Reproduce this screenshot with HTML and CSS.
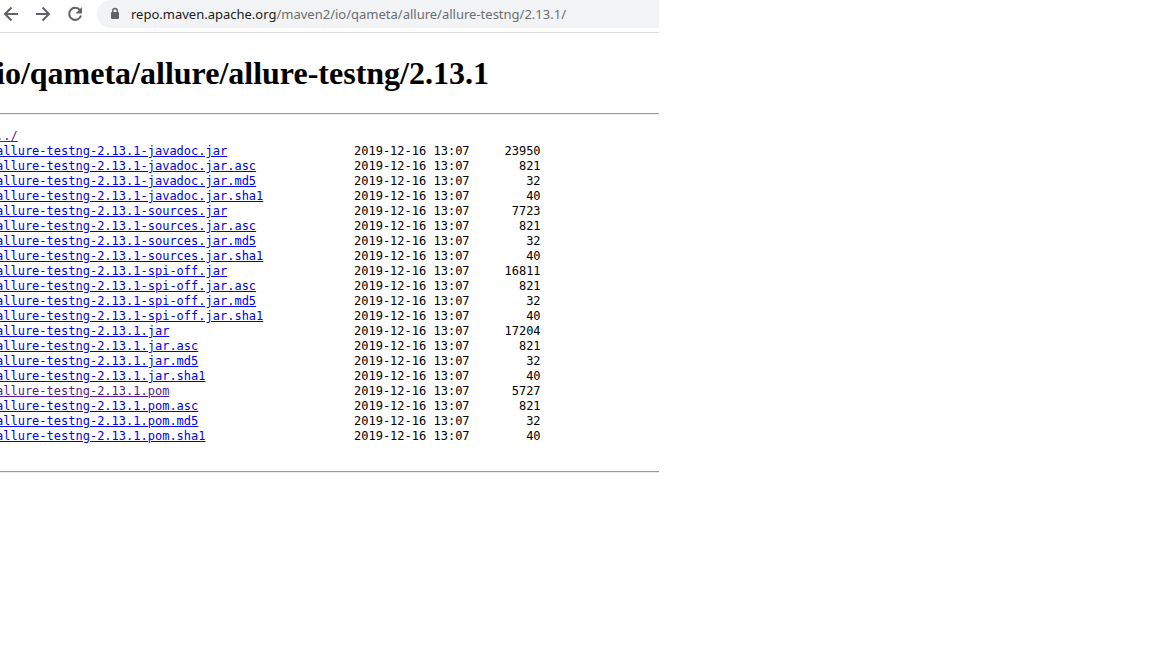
FILE: index.html
```html
<!DOCTYPE html>
<html lang="en">
<head>
<meta charset="utf-8">
<title>io/qameta/allure/allure-testng/2.13.1</title>
<link rel="stylesheet" href="styles.css">
</head>
<body>
<div class="window">
  <header class="toolbar">
    <nav class="nav">
      <button class="nav-btn" type="button" aria-label="Back"><svg width="16" height="16" viewBox="0 0 16 16"><path d="M15 8H2.5M8.5 1.5L2 8l6.500 6.500"/></svg></button>
      <button class="nav-btn" type="button" aria-label="Forward"><svg width="16" height="16" viewBox="0 0 16 16"><path d="M1 8h12.500M7.500 1.500L14 8l-6.500 6.500"/></svg></button>
      <button class="nav-btn" type="button" aria-label="Reload"><svg width="16" height="16" viewBox="0 0 16 16"><path d="M13 4.200A6 6 0 1 0 14 9.500"/><path class="solid" d="M15 1v6.500H8.500z"/></svg></button>
    </nav>
    <div class="address">
      <svg class="lock" width="10" height="14" viewBox="0 0 10 14"><rect class="lock-body" x="1" y="5" width="8" height="7" rx="1"/><path class="lock-bar" d="M2.700 5.500V3.800a2.300 2.300 0 0 1 4.600 0v1.700"/></svg>
      <div class="url" role="textbox" aria-label="Address" contenteditable="true" spellcheck="false"><span class="host">repo.maven.apache.org</span>/maven2/io/qameta/allure/allure-testng/2.13.1/</div>
    </div>
  </header>
  <main class="page">
    <h1 class="title">io/qameta/allure/allure-testng/2.13.1</h1>
    <hr class="rule">
    <table class="files">
      <tbody>
        <tr><td class="name"><a class="visited" href="#">../</a></td><td class="date"></td><td class="size"></td></tr>
        <tr><td class="name"><a href="#">allure-testng-2.13.1-javadoc.jar</a></td><td class="date">2019-12-16 13:07</td><td class="size">23950</td></tr>
        <tr><td class="name"><a href="#">allure-testng-2.13.1-javadoc.jar.asc</a></td><td class="date">2019-12-16 13:07</td><td class="size">821</td></tr>
        <tr><td class="name"><a href="#">allure-testng-2.13.1-javadoc.jar.md5</a></td><td class="date">2019-12-16 13:07</td><td class="size">32</td></tr>
        <tr><td class="name"><a href="#">allure-testng-2.13.1-javadoc.jar.sha1</a></td><td class="date">2019-12-16 13:07</td><td class="size">40</td></tr>
        <tr><td class="name"><a href="#">allure-testng-2.13.1-sources.jar</a></td><td class="date">2019-12-16 13:07</td><td class="size">7723</td></tr>
        <tr><td class="name"><a href="#">allure-testng-2.13.1-sources.jar.asc</a></td><td class="date">2019-12-16 13:07</td><td class="size">821</td></tr>
        <tr><td class="name"><a href="#">allure-testng-2.13.1-sources.jar.md5</a></td><td class="date">2019-12-16 13:07</td><td class="size">32</td></tr>
        <tr><td class="name"><a href="#">allure-testng-2.13.1-sources.jar.sha1</a></td><td class="date">2019-12-16 13:07</td><td class="size">40</td></tr>
        <tr><td class="name"><a href="#">allure-testng-2.13.1-spi-off.jar</a></td><td class="date">2019-12-16 13:07</td><td class="size">16811</td></tr>
        <tr><td class="name"><a href="#">allure-testng-2.13.1-spi-off.jar.asc</a></td><td class="date">2019-12-16 13:07</td><td class="size">821</td></tr>
        <tr><td class="name"><a href="#">allure-testng-2.13.1-spi-off.jar.md5</a></td><td class="date">2019-12-16 13:07</td><td class="size">32</td></tr>
        <tr><td class="name"><a href="#">allure-testng-2.13.1-spi-off.jar.sha1</a></td><td class="date">2019-12-16 13:07</td><td class="size">40</td></tr>
        <tr><td class="name"><a href="#">allure-testng-2.13.1.jar</a></td><td class="date">2019-12-16 13:07</td><td class="size">17204</td></tr>
        <tr><td class="name"><a href="#">allure-testng-2.13.1.jar.asc</a></td><td class="date">2019-12-16 13:07</td><td class="size">821</td></tr>
        <tr><td class="name"><a href="#">allure-testng-2.13.1.jar.md5</a></td><td class="date">2019-12-16 13:07</td><td class="size">32</td></tr>
        <tr><td class="name"><a href="#">allure-testng-2.13.1.jar.sha1</a></td><td class="date">2019-12-16 13:07</td><td class="size">40</td></tr>
        <tr><td class="name"><a class="visited" href="#">allure-testng-2.13.1.pom</a></td><td class="date">2019-12-16 13:07</td><td class="size">5727</td></tr>
        <tr><td class="name"><a href="#">allure-testng-2.13.1.pom.asc</a></td><td class="date">2019-12-16 13:07</td><td class="size">821</td></tr>
        <tr><td class="name"><a href="#">allure-testng-2.13.1.pom.md5</a></td><td class="date">2019-12-16 13:07</td><td class="size">32</td></tr>
        <tr><td class="name"><a href="#">allure-testng-2.13.1.pom.sha1</a></td><td class="date">2019-12-16 13:07</td><td class="size">40</td></tr>
      </tbody>
    </table>
    <hr class="rule">
  </main>
</div>
</body>
</html>
```
FILE: styles.css
```css
body {
  margin: 0;
  background: #fff;
  color: #000;
}
.window {
  width: 57.2%;
  overflow: hidden;
}
.toolbar {
  display: flex;
  align-items: flex-start;
  gap: 14px;
  padding-left: 3px;
  padding-bottom: 4px;
  border-bottom: 1px solid #dadce0;
}
.nav {
  display: flex;
  gap: 16px;
  padding-top: 6px;
}
.nav-btn {
  display: block;
  padding: 0;
  border: 0;
  background: none;
}
.nav-btn svg {
  display: block;
  fill: none;
  stroke: #5f6368;
  stroke-width: 2;
}
.nav-btn .solid {
  fill: #5f6368;
  stroke: none;
}
.address {
  display: flex;
  flex: 1;
  align-items: center;
  gap: 11px;
  height: 28px;
  padding-left: 13px;
  border-radius: 14px 0 0 14px;
  background: #f1f3f4;
}
.lock-body {
  fill: #5f6368;
}
.lock-bar {
  fill: none;
  stroke: #5f6368;
  stroke-width: 1.4;
}
.url {
  font: 13px/20px "Noto Sans", "Open Sans", sans-serif;
  color: #6b6f73;
  white-space: nowrap;
}
.host {
  color: #202124;
}
.page {
  margin-left: -4px;
}
.title {
  margin: 21px 0;
  font: bold 32px/38px "Liberation Serif", serif;
}
.rule {
  height: 0;
  margin: 0;
  border: 0;
  border-top: 1px solid #9a9a9a;
  border-bottom: 1px solid #eee;
}
.files {
  margin: 14px 0 27px;
  border-collapse: collapse;
  font: 12px/15px "DejaVu Sans Mono", monospace;
}
.files td {
  padding: 0;
  height: 15px;
  white-space: nowrap;
}
.files .name {
  width: 358px;
}
.files .size {
  width: 71px;
  text-align: right;
}
.files a {
  color: #00e;
  text-decoration: underline;
}
.files .visited {
  color: #551a8b;
}
```
